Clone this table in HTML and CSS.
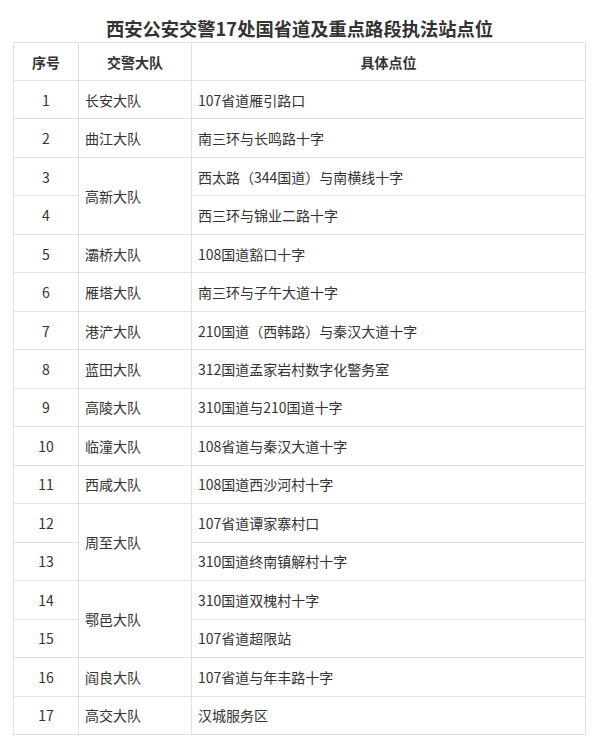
FILE: index.html
```html
<!DOCTYPE html>
<html lang="zh-CN">
<head>
<meta charset="utf-8">
<title>西安公安交警17处国省道及重点路段执法站点位</title>
<link rel="stylesheet" href="styles.css">
</head>
<body>
<div class="page">
  <h1 class="title">西安公安交警17处国省道及重点路段执法站点位</h1>
  <table class="sites">
    <colgroup>
      <col class="c-no">
      <col class="c-team">
      <col class="c-place">
    </colgroup>
    <thead>
      <tr><th>序号</th><th>交警大队</th><th>具体点位</th></tr>
    </thead>
    <tbody>
      <tr><td class="no">1</td><td>长安大队</td><td>107省道雁引路口</td></tr>
      <tr><td class="no">2</td><td>曲江大队</td><td>南三环与长鸣路十字</td></tr>
      <tr><td class="no">3</td><td rowspan="2">高新大队</td><td>西太路（344国道）与南横线十字</td></tr>
      <tr><td class="no">4</td><td>西三环与锦业二路十字</td></tr>
      <tr><td class="no">5</td><td>灞桥大队</td><td>108国道豁口十字</td></tr>
      <tr><td class="no">6</td><td>雁塔大队</td><td>南三环与子午大道十字</td></tr>
      <tr><td class="no">7</td><td>港浐大队</td><td>210国道（西韩路）与秦汉大道十字</td></tr>
      <tr><td class="no">8</td><td>蓝田大队</td><td>312国道孟家岩村数字化警务室</td></tr>
      <tr><td class="no">9</td><td>高陵大队</td><td>310国道与210国道十字</td></tr>
      <tr><td class="no">10</td><td>临潼大队</td><td>108省道与秦汉大道十字</td></tr>
      <tr><td class="no">11</td><td>西咸大队</td><td>108国道西沙河村十字</td></tr>
      <tr><td class="no">12</td><td rowspan="2">周至大队</td><td>107省道谭家寨村口</td></tr>
      <tr><td class="no">13</td><td>310国道终南镇解村十字</td></tr>
      <tr><td class="no">14</td><td rowspan="2">鄠邑大队</td><td>310国道双槐村十字</td></tr>
      <tr><td class="no">15</td><td>107省道超限站</td></tr>
      <tr><td class="no">16</td><td>阎良大队</td><td>107省道与年丰路十字</td></tr>
      <tr><td class="no">17</td><td>高交大队</td><td>汉城服务区</td></tr>
    </tbody>
  </table>
</div>
</body>
</html>
```

FILE: styles.css
```css
html, body {
  margin: 0;
  padding: 0;
  background: #ffffff;
}

body {
  font-family: "Noto Sans CJK SC", "Noto Sans", sans-serif;
  color: #333333;
}

.page {
  padding: 0 14px 0 13px;
}

.title {
  margin: 0 0 1px;
  padding-top: 15px;
  font-size: 18.3px;
  line-height: 26px;
  font-weight: 700;
  text-align: center;
  color: #333333;
}

.sites {
  width: 573px;
  border-collapse: collapse;
  table-layout: fixed;
  font-size: 14px;
}

.c-no { width: 65px; }
.c-team { width: 113px; }

.sites th,
.sites td {
  border: 1px solid #e2e2e2;
  height: 37.47px;
  padding: 0 6px;
  line-height: 20px;
  vertical-align: middle;
  text-align: left;
  font-weight: 400;
}

.sites th {
  height: 37px;
  font-weight: 700;
  text-align: center;
}

.sites td.no {
  text-align: center;
}
```
